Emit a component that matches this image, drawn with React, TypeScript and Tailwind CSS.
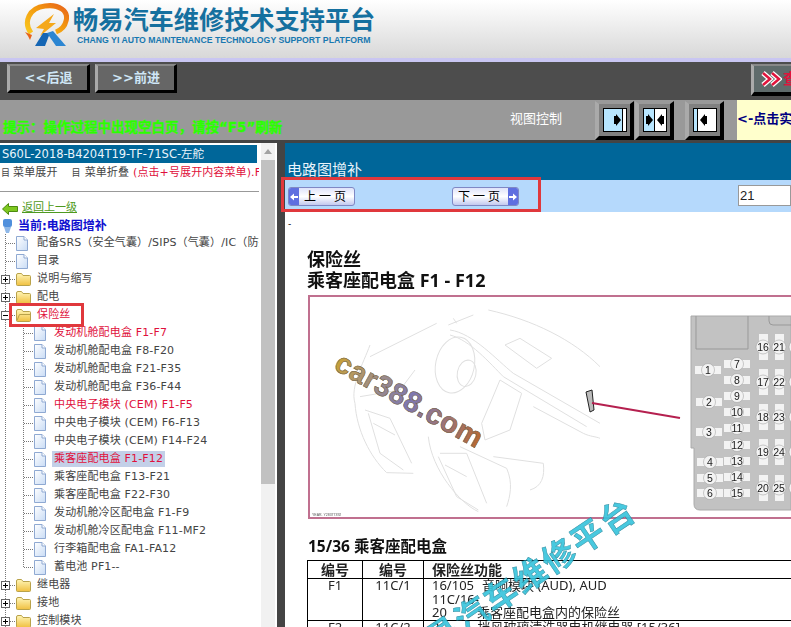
import React from "react";

type TreeRow = {
  label: string;
  level: 1 | 2;
  kind: "file" | "closed" | "open";
  red?: boolean;
  selected?: boolean;
  last?: boolean;
};

const rows: TreeRow[] = [
  { label: "配备SRS（安全气囊）/SIPS（气囊）/IC（防撞保护）", level: 1, kind: "file" },
  { label: "目录", level: 1, kind: "file" },
  { label: "说明与缩写", level: 1, kind: "closed" },
  { label: "配电", level: 1, kind: "closed" },
  { label: "保险丝", level: 1, kind: "open", red: true },
  { label: "发动机舱配电盒 F1-F7", level: 2, kind: "file", red: true },
  { label: "发动机舱配电盒 F8-F20", level: 2, kind: "file" },
  { label: "发动机舱配电盒 F21-F35", level: 2, kind: "file" },
  { label: "发动机舱配电盒 F36-F44", level: 2, kind: "file" },
  { label: "中央电子模块 (CEM) F1-F5", level: 2, kind: "file", red: true },
  { label: "中央电子模块 (CEM) F6-F13", level: 2, kind: "file" },
  { label: "中央电子模块 (CEM) F14-F24", level: 2, kind: "file" },
  { label: "乘客座配电盒 F1-F12", level: 2, kind: "file", red: true, selected: true },
  { label: "乘客座配电盒 F13-F21", level: 2, kind: "file" },
  { label: "乘客座配电盒 F22-F30", level: 2, kind: "file" },
  { label: "发动机舱冷区配电盒 F1-F9", level: 2, kind: "file" },
  { label: "发动机舱冷区配电盒 F11-MF2", level: 2, kind: "file" },
  { label: "行李箱配电盒 FA1-FA12", level: 2, kind: "file" },
  { label: "蓄电池 PF1--", level: 2, kind: "file", last: true },
  { label: "继电器", level: 1, kind: "closed" },
  { label: "接地", level: 1, kind: "closed" },
  { label: "控制模块", level: 1, kind: "closed" },
];

function Connector({ row }: { row: TreeRow }) {
  const dot = { stroke: "#777", strokeWidth: 1, strokeDasharray: "1 1" };
  if (row.level === 2) {
    return (
      <svg width="34" height="18" className="shrink-0">
        <line x1="5.5" y1="0" x2="5.5" y2="18" {...dot} />
        <line x1="23.5" y1="0" x2="23.5" y2={row.last ? 9 : 18} {...dot} />
        <line x1="24" y1="9.5" x2="34" y2="9.5" {...dot} />
      </svg>
    );
  }
  const boxed = row.kind !== "file";
  return (
    <svg width="16" height="18" className="shrink-0">
      <line x1="5.5" y1="0" x2="5.5" y2="18" {...dot} />
      <line x1="6" y1="9.5" x2="16" y2="9.5" {...dot} />
      {boxed && (
        <>
          <rect x="1.5" y="5.5" width="8" height="8" fill="#fff" stroke="#666" />
          <line x1="3" y1="9.5" x2="8" y2="9.5" stroke="#000" />
          {row.kind === "closed" && <line x1="5.5" y1="7" x2="5.5" y2="12" stroke="#000" />}
        </>
      )}
    </svg>
  );
}

function FileIcon() {
  return (
    <svg width="12" height="15" viewBox="0 0 12 15" className="shrink-0">
      <defs>
        <linearGradient id="fileFill" x1="0" y1="0" x2="1" y2="1">
          <stop offset="0" stopColor="#ffffff" />
          <stop offset="1" stopColor="#c9dcf5" />
        </linearGradient>
      </defs>
      <path d="M0.5 0.5H8L11.5 4V14.5H0.5Z" fill="url(#fileFill)" stroke="#8fa9d2" />
      <path d="M8 0.5V4H11.5" fill="#fff" stroke="#8fa9d2" />
    </svg>
  );
}

function FolderIcon({ open }: { open?: boolean }) {
  return (
    <svg width="15" height="14" viewBox="0 0 15 14" className="shrink-0">
      <defs>
        <linearGradient id="folderFill" x1="0" y1="0" x2="0" y2="1">
          <stop offset="0" stopColor="#fff6b8" />
          <stop offset="1" stopColor="#f0c040" />
        </linearGradient>
      </defs>
      <path d="M0.5 3V12.5Q0.5 13.5 1.5 13.5H13.5Q14.5 13.5 14.5 12.5V4.5Q14.5 3.5 13.5 3.5H7L5.5 1.5H2Q0.5 1.5 0.5 3Z" fill="url(#folderFill)" stroke="#b9a24a" />
      {open && <path d="M1 12.5L3.5 6.5H14" fill="none" stroke="#b9a24a" />}
    </svg>
  );
}

function Row({ row }: { row: TreeRow }) {
  const icon = row.kind === "file" ? <FileIcon /> : <FolderIcon open={row.kind === "open"} />;
  return (
    <div className="flex h-[18px] items-center text-[11px] tracking-[0.15px]">
      <Connector row={row} />
      <div className={row.level === 1 ? "flex w-[21px] shrink-0" : "flex w-[18px] shrink-0"}>{icon}</div>
      <span
        className={
          (row.selected ? "bg-[#c3d0e8] px-[2px] " : row.level === 2 ? "px-[2px] " : "") +
          (row.red ? "text-[#e0103c]" : "text-[#444]")
        }
      >
        {row.label}
      </span>
    </div>
  );
}

function BevelButton({ label, width }: { label: string; width: string }) {
  return (
    <div
      className={
        width +
        " flex h-[29px] items-center justify-center border-t-2 border-l-[3px] border-r-[3px] border-b-[3px] border-t-[#888] border-l-[#aaa] border-r-black border-b-black bg-[#666] text-[13px] font-bold text-[#cfe6f6]"
      }
    >
      {label}
    </div>
  );
}

function ViewButton({ mode }: { mode: "right" | "both" | "left" }) {
  return (
    <div className="flex h-[39px] w-[39px] items-center justify-center border-t-[3px] border-l-[4px] border-r-[4px] border-b-[4px] border-t-[#999] border-l-[#aaa] border-r-black border-b-black bg-[#808080]">
      <svg width="24" height="24" viewBox="0 0 24 24">
        <rect x="0.5" y="0.5" width="23" height="23" fill={mode === "left" ? "#fff" : "#b8e6ff"} stroke="#000" />
        {mode === "right" && <rect x="20" y="1" width="3" height="22" fill="#fff" />}
        {mode === "right" && <line x1="19.5" y1="0" x2="19.5" y2="24" stroke="#000" />}
        {mode === "both" && <rect x="12" y="1" width="11" height="22" fill="#fff" />}
        {mode === "both" && <line x1="11.5" y1="0" x2="11.5" y2="24" stroke="#000" />}
        {mode === "left" && <rect x="1" y="1" width="3" height="22" fill="#b8e6ff" />}
        {mode === "left" && <line x1="4.5" y1="0" x2="4.5" y2="24" stroke="#000" />}
        {mode === "right" && <path d="M11 8H13L13 6L18 12L13 18V16H11Z" fill="#000" />}
        {mode === "both" && <path d="M3 8H5V6L10 12L5 18V16H3ZM21 8H19V6L14 12L19 18V16H21Z" fill="#000" />}
        {mode === "left" && <path d="M14 8H12V6L7 12L12 18V16H14Z" fill="#000" />}
      </svg>
    </div>
  );
}

function PageButton({ label, next }: { label: string; next?: boolean }) {
  const tab = (
    <span className="flex h-full w-[10px] items-center justify-center bg-[#5f6fe0] text-white">
      <svg width="8" height="8" viewBox="0 0 8 8">
        {next ? <path d="M0 3H4V0.5L8 4L4 7.5V5H0Z" fill="#fff" /> : <path d="M8 3H4V0.5L0 4L4 7.5V5H8Z" fill="#fff" />}
      </svg>
    </span>
  );
  return (
    <div className="flex h-[19px] w-[67px] items-center overflow-hidden rounded-[3px] border border-[#7f88c4] bg-gradient-to-b from-[#dfe3fa] via-white to-[#c3c9ef] text-[12px] text-black">
      {!next && tab}
      <span className="flex-1 text-center tracking-[3px]">{label}</span>
      {next && tab}
    </div>
  );
}

function Logo() {
  return (
    <svg width="46" height="44" viewBox="0 0 46 44" className="shrink-0">
      <defs>
        <linearGradient id="swoosh" x1="0" y1="1" x2="1" y2="0">
          <stop offset="0" stopColor="#f9c81e" />
          <stop offset="0.6" stopColor="#f2960f" />
          <stop offset="1" stopColor="#e8641a" />
        </linearGradient>
      </defs>
      <path d="M8 30C0 19 6 5 22 3C36 1 46 8 43 18C42 23 38 27 33 29" fill="none" stroke="url(#swoosh)" strokeWidth="5" />
      <path d="M2 29L9 32L7 37L5 33Z" fill="#e8641a" />
      <path d="M13 25L31 11L26 20L33 20L17 33L21 26Z" fill="#f5a81a" />
      <path d="M12 43L20 30H27L22 43Z" fill="#1566b4" />
      <path d="M24 30L30 28L43 43H33Z" fill="#2c86d2" />
    </svg>
  );
}

const smallFuses: [number, number, string][] = [
  [708, 370, "1"], [709, 402, "2"], [709, 432, "3"], [710, 462, "4"], [710, 478, "5"], [710, 493, "6"],
  [737, 364, "7"], [737, 380, "8"], [737, 396, "9"], [737, 412, "10"], [737, 428, "11"], [737, 445, "12"],
  [737, 461, "13"], [737, 477, "14"], [737, 493, "15"],
];
const tallFuses: [number, number, string][] = [
  [763, 347, "16"], [779, 347, "21"], [763, 382, "17"], [779, 382, "22"], [763, 417, "18"], [779, 417, "23"],
  [763, 452, "19"], [779, 452, "24"], [763, 488, "20"], [779, 488, "25"],
  [796, 347, ""], [796, 382, ""], [796, 417, ""], [796, 452, ""], [796, 488, ""],
];

// page coordinates, shifted by the position of the box
function FuseDiagram() {
  return (
    <svg width="483" height="224" viewBox="308 295 483 224" className="block">
      <rect x="309" y="296" width="500" height="222" fill="#fff" stroke="#c0708f" strokeWidth="2" />
      <g transform="translate(300 290) scale(0.3333)" fill="none" stroke="#e0e0e0" strokeWidth="3">
        <path d="M565 60C700 90 820 150 900 230" />
        <path d="M410 100L210 200M520 75L445 105M460 85L470 100" />
        <path d="M450 120C520 130 590 210 640 250L900 400" />
        <path d="M450 135C510 150 570 220 610 260L860 410" />
        <ellipse cx="465" cy="225" rx="58" ry="85" transform="rotate(12 465 225)" />
        <ellipse cx="500" cy="250" rx="28" ry="40" transform="rotate(12 500 250)" />
        <path d="M615 165L660 145L755 205L710 235Z" />
        <path d="M600 270L665 310L630 420L555 450L545 400L575 330Z" />
        <path d="M700 350L850 430C870 440 890 440 900 445" />
        <path d="M210 165C190 220 150 290 165 340C170 420 210 500 260 548L340 550" />
        <path d="M195 360L270 385L335 520M205 370L240 490L310 540M220 400L285 435" />
        <path d="M345 240L300 300L180 320" />
        <path d="M385 440C395 540 480 640 535 665" />
        <path d="M420 490L500 490L560 640M435 525L500 560M415 500L470 620L535 660" />
        <path d="M480 470L620 535C640 580 630 620 620 650M580 500L730 520C735 560 725 590 690 600" />
      </g>
      <path d="M586 392L592 390L594 410L590 412Z" fill="#bbb" stroke="#222" />
      <line x1="592" y1="403" x2="680" y2="418" stroke="#b5204f" strokeWidth="2" />
      <path d="M691 316H791V510H700Q694 510 694 504V448H691Z" fill="#c2c2c2" stroke="#aaa" />
      <path d="M696 316V349H748V316" fill="none" stroke="#999" />
      <path d="M769 316V321Q769 325 773 325H791" fill="none" stroke="#999" />
      {smallFuses.map(([x, y, n]) => (
        <g key={n}>
          <rect x={x - 13} y={y - 4} width="26" height="8" fill="#f3f3f3" />
          <circle cx={x} cy={y} r="6.5" fill="#f3f3f3" stroke="#999" strokeWidth="0.5" />
          <text x={x} y={y + 3.5} textAnchor="middle" fontSize="10.5" fill="#222" fontFamily="Liberation Sans, sans-serif">{n}</text>
        </g>
      ))}
      {tallFuses.map(([x, y, n]) => (
        <g key={x + "-" + y}>
          <rect x={x - 4} y={y - 13} width="9" height="26" fill="#f3f3f3" />
          <circle cx={x} cy={y} r="7" fill="#f3f3f3" stroke="#999" strokeWidth="0.5" />
          <text x={x} y={y + 3.5} textAnchor="middle" fontSize="10.5" fill="#222" fontFamily="Liberation Sans, sans-serif">{n}</text>
        </g>
      ))}
      <text x="312" y="516" fontSize="3.5" fill="#555" fontFamily="Liberation Sans, sans-serif">YEAR. Y28377392</text>
    </svg>
  );
}

export default function App() {
  return (
    <div className="relative flex h-[627px] w-[791px] flex-col overflow-hidden bg-[#444] font-['DejaVu_Sans','Noto_Sans_CJK_SC',sans-serif] text-[12px]">
      {/* header */}
      <div className="flex h-[62px] shrink-0 items-start gap-[4px] border-b-[4px] border-[#c9c6f2] bg-gradient-to-b from-white to-[#d8d8d8] pl-[23px] pt-[3px]">
        <Logo />
        <div className="flex flex-col">
          <div className="text-[25.2px] leading-[31px] font-bold whitespace-nowrap text-[#15709f] font-['Noto_Sans_CJK_SC',sans-serif]">
            畅易汽车维修技术支持平台
          </div>
          <div className="pl-[4px] text-[8.7px] leading-[12px] font-bold whitespace-nowrap text-[#1878b0] font-['Liberation_Sans',sans-serif]">
            CHANG YI AUTO MAINTENANCE TECHNOLOGY SUPPORT PLATFORM
          </div>
        </div>
      </div>

      {/* back / forward bar */}
      <div className="flex h-[38px] shrink-0 items-start gap-[5px] bg-[#4d4d4d] pl-[7px] pt-[2px]">
        <BevelButton label="<<后退" width="w-[83px]" />
        <BevelButton label=">>前进" width="w-[82px]" />
        <div className="ml-auto flex h-[32px] w-[40px] items-center gap-[1px] overflow-hidden border-t-2 border-l-[3px] border-b-[4px] border-t-[#888] border-l-[#aaa] border-b-black bg-[#5f6b6b] pl-[7px] whitespace-nowrap">
          <svg width="21" height="16" viewBox="0 0 21 16" className="shrink-0">
            <path d="M2 2L9 8L2 14M11 2L18 8L11 14" fill="none" stroke="#fff" strokeWidth="5" />
            <path d="M2 2L9 8L2 14M11 2L18 8L11 14" fill="none" stroke="#e0143c" strokeWidth="2.5" />
          </svg>
          <span className="text-[15px] font-bold text-[#e0143c]">查询</span>
        </div>
      </div>

      {/* hint bar */}
      <div className="flex h-[40px] shrink-0 bg-[#999]">
        <div className="w-[510px] shrink-0 pt-[18px] pl-[3px] text-[13.5px] leading-[18px] font-bold whitespace-nowrap text-[#2bff00] [-webkit-text-stroke:0.4px_#2bff00]">
          提示：操作过程中出现空白页，请按“F5”刷新
        </div>
        <div className="w-[85px] shrink-0 pt-[10px] text-[13px] leading-[18px] text-white">视图控制</div>
        <div className="flex w-[142px] shrink-0 items-start pt-[1px]">
          <ViewButton mode="right" />
          <div className="ml-[1px]">
            <ViewButton mode="both" />
          </div>
          <div className="ml-[11px]">
            <ViewButton mode="left" />
          </div>
        </div>
        <div className="flex-1 overflow-hidden bg-[#ffffcc] pt-[10px] text-[13px] leading-[18px] font-bold whitespace-nowrap text-[#000080]">
          &lt;-点击实
        </div>
      </div>

      <div className="mt-[3px] flex min-h-0 flex-1">
        {/* left tree panel */}
        <div className="flex w-[277px] shrink-0 bg-white">
          <div className="w-[259px] shrink-0 overflow-hidden whitespace-nowrap">
            <div className="mt-[2px] mr-[2px] h-[18px] bg-[#006699] pl-[2px] text-[11.5px] leading-[18px] text-[#eaf5fc]">
              S60L-2018-B4204T19-TF-71SC-左舵
            </div>
            <div className="flex h-[19px] items-center pt-[2px] pl-[1px] text-[11px] tracking-[0.1px] text-[#444]">
              <span className="mr-[3px] text-[9px]">目</span>
              <span>菜单展开</span>
              <span className="mr-[4px] ml-[14px] text-[9px]">目</span>
              <span>菜单折叠</span>
              <span className="ml-[4px] text-[#e0103c]">(点击+号展开内容菜单).F</span>
            </div>
            <div className="mt-[9px] border-t border-[#999]" />
            <div className="mt-[8px] flex h-[17px] items-center">
              <svg width="16" height="12" viewBox="0 0 16 12" className="ml-[2px] shrink-0">
                <path d="M0.5 6L6.5 0.5V3.5H15.5V8.5H6.5V11.5Z" fill="#7ec820" stroke="#4d8a10" />
              </svg>
              <span className="ml-[4px] text-[11px] text-[#4e9a20] underline">返回上一级</span>
            </div>
            <div className="flex h-[17px] items-center">
              <svg width="11" height="16" viewBox="0 0 11 16" className="ml-[2px] shrink-0">
                <rect x="1" y="1" width="9" height="8" rx="2" fill="#4f8fdc" />
                <path d="M2 9H9L7 15H4Z" fill="#8fb8e8" />
              </svg>
              <span className="ml-[5px] font-bold text-[#1010d0]">当前:电路图增补</span>
            </div>
            {rows.map((r) => (
              <Row key={r.label} row={r} />
            ))}
          </div>
          {/* scrollbar */}
          <div className="ml-[2px] flex w-[14px] shrink-0 flex-col bg-[#f1f1f1]">
            <div className="flex h-[17px] items-center justify-center">
              <svg width="8" height="5" viewBox="0 0 8 5">
                <path d="M0 5L4 0L8 5Z" fill="#a3a3a3" />
              </svg>
            </div>
            <div className="h-[324px] bg-[#c1c1c1]" />
          </div>
        </div>

        {/* right document panel */}
        <div className="ml-[8px] flex min-w-0 flex-1 flex-col bg-white">
          <div className="h-[37px] shrink-0 bg-[#006699] pt-[17px] pl-[2px] text-[15px] leading-[20px] text-[#e8f4fb]">
            电路图增补
          </div>
          <div className="flex h-[32px] shrink-0 items-start bg-[#b5d9fc] pt-[7px] pl-[3px]">
            <PageButton label="上一页" />
            <div className="ml-[97px]">
              <PageButton label="下一页" next />
            </div>
            <div className="ml-[219px] -mt-[2px] h-[21px] flex-1 border border-[#999] bg-white pl-[1px] text-[13px] leading-[19px] text-[#222] font-['Liberation_Sans',sans-serif]">
              21
            </div>
          </div>
          <div className="pt-[7px] pl-[3px] text-[9px] leading-[10px] text-black">-</div>
          <div className="pl-[23px] font-['Noto_Sans','Noto_Sans_CJK_SC',sans-serif] blur-[0.3px]">
            <div className="mt-[20px] -ml-[1px] text-[18px] leading-[21px] font-bold text-[#111]">保险丝</div>
            <div className="-ml-[1px] text-[18px] leading-[21px] font-bold whitespace-nowrap text-[#111]">乘客座配电盒 F1 - F12</div>
            <div className="mt-[4px] w-[483px]">
              <FuseDiagram />
            </div>
            <div className="mt-[17px] text-[15.5px] leading-[20px] font-bold whitespace-nowrap text-[#111]">15/36 乘客座配电盒</div>
            <table className="mt-[4px] -ml-[1px] w-[500px] table-fixed border-collapse border border-black text-[13px] leading-[13.5px] text-[#222]">
              <colgroup>
                <col className="w-[55px]" />
                <col className="w-[61px]" />
                <col />
              </colgroup>
              <thead>
                <tr className="h-[18px] text-[14px] font-bold">
                  <th className="border border-black">编号</th>
                  <th className="border border-black">编号</th>
                  <th className="border border-black pl-[8px] text-left">保险丝功能</th>
                </tr>
              </thead>
              <tbody>
                <tr className="h-[42px]">
                  <td className="border border-black text-center align-top">F1</td>
                  <td className="border border-black text-center align-top">11C/1</td>
                  <td className="border border-black pl-[8px] align-top whitespace-nowrap">
                    16/105<span className="ml-[8px]">音响模块 (AUD), AUD</span>
                    <br />
                    11C/16-
                    <br />
                    20<span className="ml-[30px]">乘客座配电盒内的保险丝</span>
                  </td>
                </tr>
                <tr>
                  <td className="border border-black text-center align-top">F2</td>
                  <td className="border border-black text-center align-top">11C/2</td>
                  <td className="border border-black pl-[8px] align-top whitespace-nowrap">
                    2<span className="ml-[38px]">挡风玻璃清洗器电机继电器 [15/36]</span>
                  </td>
                </tr>
              </tbody>
            </table>
          </div>
        </div>
      </div>

      {/* watermarks over the document */}
      <div className="absolute top-[385px] left-[327px] rotate-[29deg] bg-gradient-to-r from-[#c8a030] via-[#7f78b0] to-[#b8682c] bg-clip-text text-[29px] leading-[30px] font-bold tracking-[0.5px] whitespace-nowrap text-transparent [-webkit-text-stroke:0.5px_#6b5a3a] font-['Liberation_Sans',sans-serif]">
        car388.com
      </div>
      <div className="absolute top-[561px] left-[375px] -rotate-[34deg] text-[33px] leading-[44px] font-bold tracking-[2px] whitespace-nowrap text-[#35c4dc] opacity-90 [-webkit-text-stroke:0.5px_#1f7f94] font-['Noto_Sans_CJK_SC',sans-serif]">
        畅易汽车维修平台
      </div>

      {/* red highlight boxes */}
      <div className="absolute top-[303px] left-[9px] h-[24px] w-[75px] border-[3px] border-[#e0383c]" />
      <div className="absolute top-[177px] left-[281px] h-[35px] w-[260px] border-[3px] border-[#e0383c]" />
    </div>
  );
}
